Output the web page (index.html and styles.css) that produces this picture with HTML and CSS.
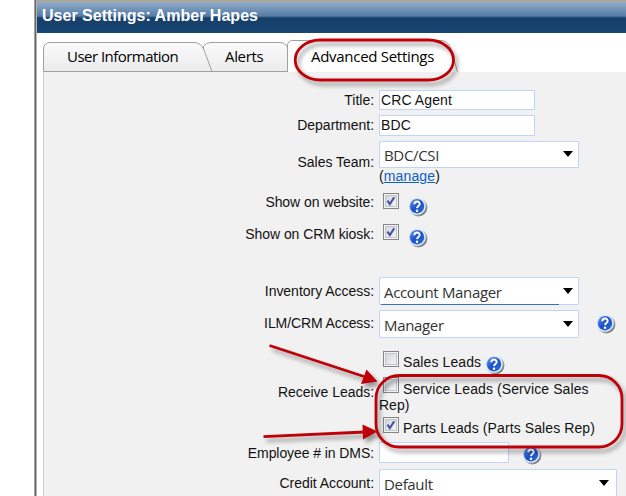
FILE: index.html
```html
<!DOCTYPE html>
<html lang="en">
<head>
<meta charset="utf-8">
<title>User Settings</title>
<link rel="stylesheet" href="styles.css">
</head>
<body>
<svg class="defs" width="0" height="0" aria-hidden="true">
  <defs>
    <linearGradient id="tabFill" x1="0" y1="0" x2="0" y2="1"><stop offset="0" stop-color="#fbfbfb"/><stop offset="1" stop-color="#ebebeb"/></linearGradient>
    <linearGradient id="blue" x1="0" y1="0" x2="1" y2="1"><stop offset="0" stop-color="#6698e8"/><stop offset=".5" stop-color="#1b50c8"/><stop offset="1" stop-color="#2e6ddb"/></linearGradient>
    <linearGradient id="rim" x1="0" y1="0" x2="1" y2="1"><stop offset="0" stop-color="#e4eefb"/><stop offset=".55" stop-color="#aeb6c2"/><stop offset="1" stop-color="#55595f"/></linearGradient>
    <symbol id="help" viewBox="0 0 20 20">
      <circle cx="10.300" cy="10.300" r="9.100" fill="url(#rim)"/>
      <circle cx="9.200" cy="9.200" r="8.600" fill="#dce8f7"/>
      <circle cx="9" cy="9.200" r="7.200" fill="url(#blue)"/>
      <path d="M6.300 7.200C6.500 3.600 11.900 3.800 11.700 7C11.600 8.900 9.100 9 9 11.100" fill="none" stroke="#fff" stroke-width="2"/>
      <circle cx="9" cy="13.800" r="1.250" fill="#fff"/>
    </symbol>
    <symbol id="tick" viewBox="0 0 16 16"><path d="M4 7.500L6.700 11.500L11.700 3.700" fill="none" stroke="#42549b" stroke-width="2.400"/></symbol>
  </defs>
</svg>
<main class="window">
  <header class="titlebar">User Settings: Amber Hapes</header>
  <nav class="tabs">
    <svg class="tab-shapes" width="583" height="39" viewBox="43 33 583 39">
      <path d="M203.500 71.500V46Q206 42.500 211 42.500H280Q285 42.500 287.500 47V71.500Z" fill="url(#tabFill)" stroke="#a0a0a0"/>
      <path d="M43.500 71.500V49Q44 42.500 50 42.500H194Q201 42.500 204 50L212 71.500Z" fill="url(#tabFill)" stroke="#a0a0a0"/>
      <path d="M287.500 72V45Q288 40.500 293 40.500H441Q448 40.500 451 49L457.500 72" fill="#fff" stroke="#a0a0a0"/>
    </svg>
    <a class="tab info"><span>User Information</span></a>
    <a class="tab alerts"><span>Alerts</span></a>
    <a class="tab advanced"><span>Advanced Settings</span></a>
  </nav>
  <form class="panel">
    <div class="row title"><label>Title:</label><div class="field"><span class="input">CRC Agent</span></div></div>
    <div class="row dept"><label>Department:</label><div class="field"><span class="input">BDC</span></div></div>
    <div class="row team"><label>Sales Team:</label><div class="field stack"><span class="select"><span>BDC/CSI</span><i></i></span><span class="manage">(<a>manage</a>)</span></div></div>
    <div class="row site"><label>Show on website:</label><div class="field"><span class="check"><svg><use href="#tick"/></svg></span><svg class="help"><use href="#help"/></svg></div></div>
    <div class="row kiosk"><label>Show on CRM kiosk:</label><div class="field"><span class="check"><svg><use href="#tick"/></svg></span><svg class="help"><use href="#help"/></svg></div></div>
    <div class="row inventory"><label>Inventory Access:</label><div class="field"><span class="select active"><span>Account Manager</span><i></i></span></div></div>
    <div class="row access"><label>ILM/CRM Access:</label><div class="field"><span class="select"><span>Manager</span><i></i></span><svg class="help"><use href="#help"/></svg></div></div>
    <div class="row leads"><label>Receive Leads:</label><div class="field stack">
      <div class="lead"><span class="check"></span><span class="caption">Sales Leads</span><svg class="help"><use href="#help"/></svg></div>
      <div class="lead service"><span class="check"></span><span class="caption">Service Leads (Service Sales</span></div>
      <div class="wrapped">Rep)</div>
      <div class="lead parts"><span class="check"><svg><use href="#tick"/></svg></span><span class="caption">Parts Leads (Parts Sales Rep)</span></div>
    </div></div>
    <div class="row employee"><label>Employee # in DMS:</label><div class="field"><span class="input"></span><svg class="help"><use href="#help"/></svg></div></div>
    <div class="row credit"><label>Credit Account:</label><div class="field"><span class="select"><span>Default</span><i></i></span></div></div>
  </form>
</main>
<svg class="annotations" width="626" height="496" viewBox="0 0 626 496">
  <g fill="none" stroke="#c00008" stroke-width="2.800">
    <rect x="295.200" y="40" width="158.300" height="40" rx="25" ry="20"/>
    <rect x="376" y="375.500" width="246" height="71.500" rx="23"/>
    <path d="M269.500 345.500L364 376.500M263.500 436.700L365 432"/>
  </g>
  <path d="M366.500 369.500L377.500 381.500L361 384ZM362.500 424.500L377.500 431.500L363 439.500Z" fill="#c00008"/>
</svg>
</body>
</html>
```
FILE: styles.css
```css
* { box-sizing: border-box; }
body { margin: 0; width: 626px; height: 496px; overflow: hidden; background: #fff; color: #111; font: 14px/16px "Liberation Sans", Arial, sans-serif; }
.defs { position: absolute; }
.window { margin-left: 34px; height: 496px; border-left: 1px solid #a0a0a0; box-shadow: inset 1px 0 #666, inset 2px 0 #b4b4b4; padding-left: 2px; overflow: hidden; }
.titlebar { height: 33px; padding: 5px 0 0 5px; border-top: 2px solid #aaa798; background: linear-gradient(#92acc9 0, #557ca6 14px, #335d8d 15px, #173e69 16px, #174773 100%); color: #fff; font-size: 16px; font-weight: bold; line-height: 18px; letter-spacing: .02px; }
.tabs { height: 39px; display: flex; position: relative; color: #000; font: 15px/20px "Open Sans", sans-serif; }
.tab-shapes { position: absolute; left: 6px; top: 0; }
.tab { position: relative; padding: 13px 0 0; white-space: nowrap; }
.info { width: 158px; margin-left: 30px; letter-spacing: -.53px; }
.alerts { width: 86px; letter-spacing: -.35px; }
.advanced { letter-spacing: -.29px; }
.panel { margin-left: 6px; height: 424px; padding-top: 18px; background: #f1f1f1; border-left: 1px solid #d0d0d0; }
.row { display: grid; grid-template-columns: 330px 1fr; column-gap: 5px; align-items: start; }
.row label { text-align: right; white-space: nowrap; letter-spacing: -.03px; }
.field { display: flex; align-items: flex-start; }
.stack { flex-direction: column; }
.input { width: 156px; height: 20px; border: 1px solid #bdd5f7; background: #fff; padding: 1px 1px; line-height: 16px; letter-spacing: .1px; }
.select { position: relative; width: 200px; height: 28px; display: flex; align-items: center; justify-content: space-between; border: 1px solid #bdd5f7; border-radius: 1px; background: #fff; padding: 1px 5px 0 4px; color: #333; font: 15px/20px "Open Sans", sans-serif; letter-spacing: -.33px; }
.select i { width: 0; height: 0; margin-top: -2px; border: 5px solid transparent; border-top: 6px solid #000; border-bottom: 0; }
.active::after { content: ""; position: absolute; left: 1px; right: 19px; bottom: -1px; height: 1px; background: #376fc7; }
.check { width: 16px; height: 16px; margin-left: 4px; flex: none; border: 1px solid #858585; background: linear-gradient(135deg, #ccd1d8, #fafafa); box-shadow: inset 0 0 0 1px #f4f4f4, inset 0 0 0 2px #c0c4ca; }
.check svg { display: block; width: 14px; height: 14px; }
.help { width: 20px; height: 20px; flex: none; }
.title { height: 25px; }
.title label { padding-top: 2px; }
.dept { height: 26px; }
.dept label { padding-top: 2px; }
.dept .input { height: 21px; }
.team { height: 52px; }
.team label { padding-top: 13px; }
.team .select { height: 27px; padding-top: 0; }
.manage { line-height: 16px; letter-spacing: .12px; }
.manage a { color: #0b60c5; text-decoration: underline; }
.site { height: 31px; }
.site label, .kiosk label { padding-top: 1px; letter-spacing: -.07px; }
.site .help, .kiosk .help { margin: 4px 0 0 9px; }
.kiosk { height: 53px; }
.kiosk label { padding-top: 2px; }
.inventory { height: 33px; }
.inventory label { padding-top: 6px; }
.access { height: 41px; }
.access label { padding-top: 5px; letter-spacing: -.09px; }
.access .help { margin: 4px 0 0 17px; }
.leads { height: 91px; }
.leads label { padding-top: 33px; }
.lead { display: flex; height: 26px; white-space: nowrap; }
.caption { padding: 3px 0 0 4px; font-size: 14px; letter-spacing: .1px; }
.service .caption { padding-top: 4px; }
.lead .help { margin: 4px 0 0 4px; }
.wrapped { height: 15px; margin-top: -6px; line-height: 16px; }
.parts { margin-top: 5px; }
.employee { height: 27px; }
.employee label { padding-top: 3px; letter-spacing: -.08px; }
.employee .input { width: 130px; height: 21px; }
.employee .help { margin: 3px 0 0 13px; }
.credit label { padding-top: 6px; }
.credit .select { width: 238px; padding-right: 7px; }
.annotations { position: absolute; left: 0; top: 0; pointer-events: none; filter: drop-shadow(3px 4px 2px rgba(0,0,0,.38)); }
```
